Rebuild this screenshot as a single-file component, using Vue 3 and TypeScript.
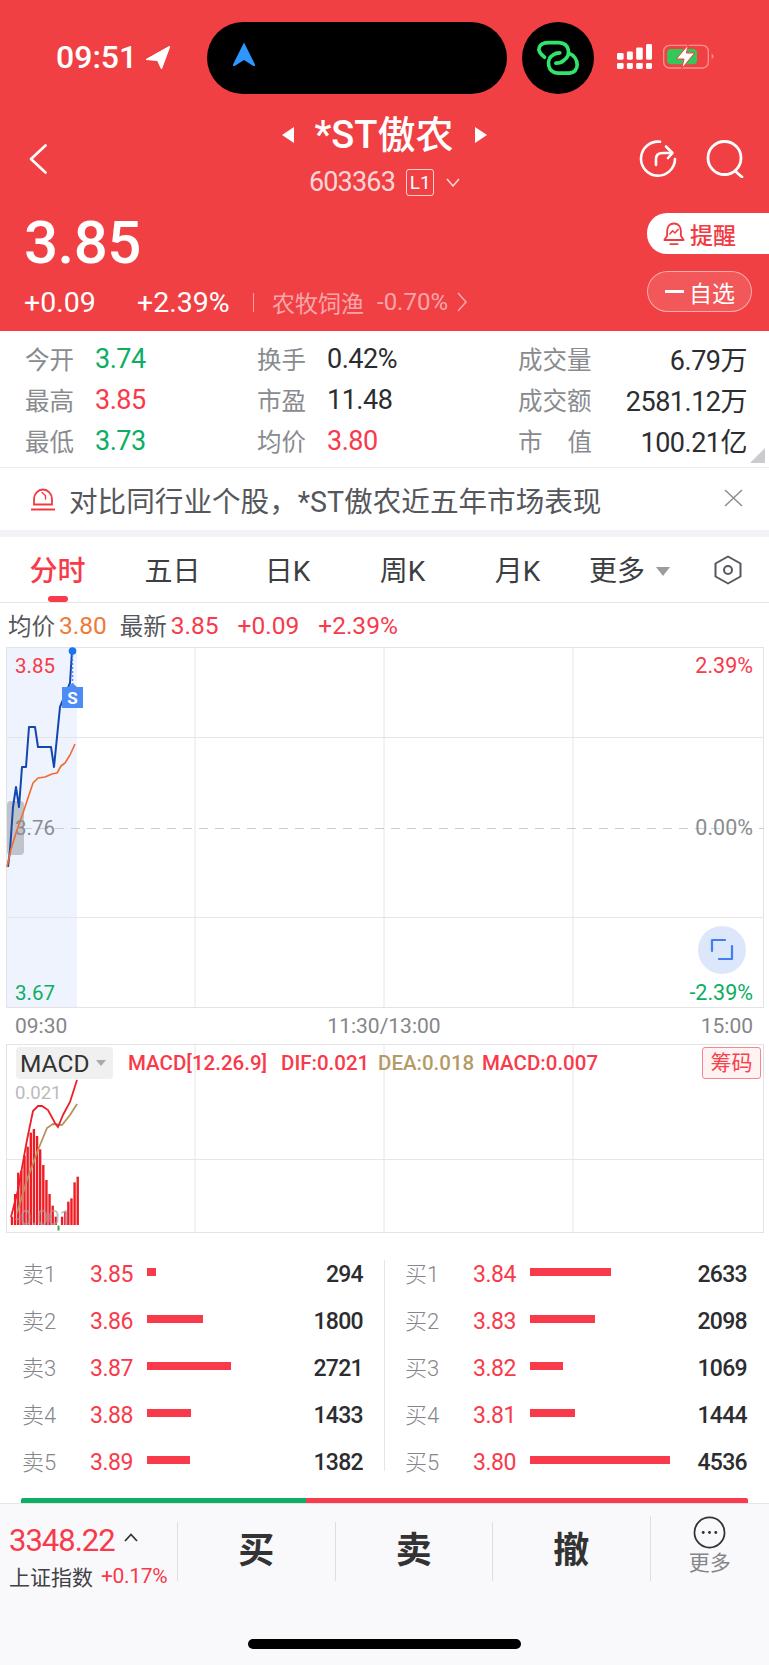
<script setup lang="ts">
interface Stat { label: string; value: string; tone: string }
const stats: Stat[][] = [
  [
    { label: '今开', value: '3.74', tone: 'green' },
    { label: '最高', value: '3.85', tone: 'red' },
    { label: '最低', value: '3.73', tone: 'green' },
  ],
  [
    { label: '换手', value: '0.42%', tone: 'dark' },
    { label: '市盈', value: '11.48', tone: 'dark' },
    { label: '均价', value: '3.80', tone: 'red' },
  ],
]
const stats3 = [
  { label: ['成交量'], value: '6.79万' },
  { label: ['成交额'], value: '2581.12万' },
  { label: ['市', '值'], value: '100.21亿' },
]
const tabs = ['分时', '五日', '日K', '周K', '月K']
const asks = [
  { n: '卖1', p: '3.85', v: 294 },
  { n: '卖2', p: '3.86', v: 1800 },
  { n: '卖3', p: '3.87', v: 2721 },
  { n: '卖4', p: '3.88', v: 1433 },
  { n: '卖5', p: '3.89', v: 1382 },
]
const bids = [
  { n: '买1', p: '3.84', v: 2633 },
  { n: '买2', p: '3.83', v: 2098 },
  { n: '买3', p: '3.82', v: 1069 },
  { n: '买4', p: '3.81', v: 1444 },
  { n: '买5', p: '3.80', v: 4536 },
]
const barW = (v: number) => `${(v * 0.0309).toFixed(1)}px`
const blue = '8,867 10,850 13,807 16,787 19,807 22,767 26,767 29,727 35,727 38,747 51,747 54,767 60,707 70,683 72,651'
const orange = '7,867 11,849 17,830 23,813 28,798 33,783 38,778 45,777 52,774 57,773 61,766 65,763 70,755 75,744'
const histTops = [530, 462, 398, 392, 347, 320, 278, 267, 288, 328, 375, 420, 462, 497, 530, 0, 530, 515, 485, 475, 427, 410]
const hist = histTops.map((t, i) => ({ x: 10.8 + i * 3.13, y: 1040 + t / 3, h: (555 - t) / 3 })).filter((b) => b.h < 100)
const dif = '11,1217 18,1190 27,1140 33,1111 38,1106 42,1106 48,1110 55,1123 58,1127 63,1115 70,1102 77,1080'
const dea = '17,1213 27,1180 38,1150 47,1128 53,1124 62,1125 70,1115 77,1104'
</script>

<template>
  <div class="page">
    <header class="hero">
      <div class="status">
        <div class="clock">
          <span>09:51</span>
          <svg class="loc" viewBox="148 46 24 23"><path d="M172 46 148 59.5 159.5 60.5 163.5 69Z" fill="#fff" stroke="#fff" stroke-width="1" stroke-linejoin="round" /></svg>
        </div>
        <div class="island">
          <svg class="nav-arrow" viewBox="232 43 24 27"><path d="M244 44.5 255 66.500 Q255.500 69 252.500 67.500L244 62 235.500 67.500Q232.500 69 233 66.500Z" fill="#2f96ff" /></svg>
        </div>
        <div class="island-dot">
          <svg class="link" viewBox="100 120 145 110" fill="none" stroke="#2fe56b" stroke-width="11" stroke-linecap="round">
            <path d="M132 172C102 150 115 128 145 128L175 128C208 130 212 165 192 180 184 188 172 190 166 190" />
            <path d="M205 160C238 172 240 220 205 220L172 220C140 218 135 178 158 165 164 160 172 159 178 159" />
          </svg>
        </div>
        <svg class="signal" viewBox="350 133 106 75" fill="#fff">
          <rect x="350" y="190" width="20" height="18" rx="4" /><rect x="380" y="190" width="18" height="18" rx="4" /><rect x="408" y="190" width="20" height="18" rx="4" /><rect x="438" y="190" width="18" height="18" rx="4" />
          <rect x="350" y="160" width="20" height="20" rx="4" /><rect x="380" y="155" width="18" height="25" rx="4" /><rect x="408" y="143" width="20" height="37" rx="4" /><rect x="438" y="133" width="18" height="47" rx="4" />
        </svg>
        <svg class="battery" viewBox="490 133 152 75">
          <rect x="492" y="137" width="134" height="68" rx="18" fill="none" stroke="#fff" stroke-opacity=".42" stroke-width="4" />
          <rect x="502" y="148" width="90" height="46" rx="12" fill="#34c759" />
          <path d="M636 161 642 170 636 180Z" fill="#fff" fill-opacity=".42" />
          <path d="M566 135 530 178 553 178 546 207 585 160 560 160Z" fill="#fff" stroke="#f24045" stroke-width="3" stroke-linejoin="round" />
        </svg>
      </div>

      <div class="nav">
        <svg class="back" viewBox="0 0 18 30" fill="none" stroke="#fff" stroke-width="2.600" stroke-linecap="round" stroke-linejoin="round"><path d="M16.500 1.500 2 15 16.500 28.500" /></svg>
        <div class="nav-mid">
          <div class="title-row">
            <i class="tri tri-l"></i>
            <span class="title">*ST傲农</span>
            <i class="tri tri-r"></i>
          </div>
          <div class="code-row">
            <span class="code">603363</span>
            <span class="l1">L1</span>
            <svg class="code-chev" viewBox="0 0 14 9" fill="none" stroke="#fff" stroke-opacity=".8" stroke-width="1.500"><path d="M1 1 7 8 13 1" /></svg>
          </div>
        </div>
        <div class="nav-icons">
          <svg class="nav-ic" viewBox="0 0 38 38" fill="none" stroke="#fff" stroke-width="2.600" stroke-linecap="round" stroke-linejoin="round">
            <path d="M21 1.800A17 17 0 1 0 36 19" />
            <path d="M17 25V19Q17 13 24 13H32" />
            <path d="M27 6.500 33.500 13 29 18" />
          </svg>
          <svg class="nav-ic" viewBox="0 0 38 38" fill="none" stroke="#fff" stroke-width="2.800" stroke-linecap="round"><circle cx="18.500" cy="18" r="16.500" /><path d="M29 31 36 37" /></svg>
        </div>
      </div>

      <div class="quote">
        <div class="quote-left">
          <div class="price">3.85</div>
          <div class="quote-line">
            <span class="chg">+0.09</span>
            <span class="pct">+2.39%</span>
            <i class="qsep"></i>
            <span class="sector">农牧饲渔</span>
            <span class="sector-pct">-0.70%</span>
            <svg class="sector-chev" viewBox="0 0 10 20" fill="none" stroke="#fff" stroke-opacity=".55" stroke-width="1.500"><path d="M1 1 9 10 1 19" /></svg>
          </div>
        </div>
        <div class="quote-right">
          <div class="remind">
            <svg class="bell" viewBox="0 0 24 26" fill="none" stroke="#f23a42" stroke-width="2" stroke-linecap="round" stroke-linejoin="round">
              <path d="M12 1.500C6.500 1.500 4.500 6 4.500 10V15L1.500 19.500H22.500L19.500 15V10C19.500 6 17.500 1.500 12 1.500Z" />
              <path d="M8 24H16" />
              <path d="M7.500 13 10.500 9.500 13 12 16.500 8" stroke-width="1.600" />
            </svg>
            <span>提醒</span>
          </div>
          <div class="watch"><i class="minus"></i><span>自选</span></div>
        </div>
      </div>
    </header>

    <section class="stats">
      <div v-for="(col, ci) in stats" :key="ci" class="stat-col" :class="`stat-col-${ci}`">
        <div v-for="s in col" :key="s.label" class="stat-row">
          <span class="s-label">{{ s.label }}</span>
          <span class="s-val" :class="s.tone">{{ s.value }}</span>
        </div>
      </div>
      <div class="stat-col stat-col-2">
        <div v-for="s in stats3" :key="s.value" class="stat-row between">
          <span class="s-label wide"><span v-for="c in s.label" :key="c">{{ c }}</span></span>
          <span class="s-val dark">{{ s.value }}</span>
        </div>
      </div>
      <i class="corner"></i>
    </section>

    <section class="notice">
      <svg class="alarm" viewBox="0 0 24 24" fill="none" stroke="#f23a42" stroke-width="1.800" stroke-linecap="round">
        <path d="M3 17.500V12A9 9.500 0 0 1 21 12V17.500Z" />
        <path d="M.5 22.500H23.500" />
        <path d="M11 5.500 14.500 8.500V12" stroke-width="1.400" />
      </svg>
      <span class="notice-text">对比同行业个股，*ST傲农近五年市场表现</span>
      <svg class="close" viewBox="0 0 19 18" fill="none" stroke="#8a8d93" stroke-width="1.500"><path d="M1 1 18 17M18 1 1 17" /></svg>
    </section>
    <div class="band"></div>

    <nav class="tabs">
      <div v-for="(t, i) in tabs" :key="t" class="tab" :class="{ active: i === 0 }">{{ t }}</div>
      <div class="tab more"><span>更多</span><i class="more-tri"></i></div>
      <div class="tab gear">
        <svg viewBox="0 0 28 30" width="28" height="30" fill="none" stroke="#55585e" stroke-width="2"><path d="M14 1.500 26.500 8.500V21.500L14 28.500 1.500 21.500V8.500Z" stroke-linejoin="round" /><circle cx="14" cy="15" r="4" /></svg>
      </div>
    </nav>

    <div class="info">
      <span class="i-k">均价</span><span class="i-avg">3.80</span>
      <span class="i-k i-k2">最新</span><span class="red">3.85</span>
      <span class="red i-chg">+0.09</span>
      <span class="red i-pct">+2.39%</span>
    </div>

    <section class="chart">
      <svg class="chart-svg" viewBox="6 647 758 361">
        <rect x="7" y="648" width="70" height="359" fill="#eef3fe" />
        <g stroke="#e6e6e8" stroke-width="1">
          <path d="M195 648V1007M384 648V1007M573 648V1007M7 737.500H764M7 917.500H764" />
        </g>
        <path d="M7 828.500H764" stroke="#bcd0e4" stroke-width="1" stroke-dasharray="9 7" />
        <rect x="7" y="801" width="17" height="54" rx="4" fill="#bfc3ca" />
        <polyline :points="blue" fill="none" stroke="#1247b0" stroke-width="2" stroke-linejoin="round" />
        <polyline :points="orange" fill="none" stroke="#f26a2e" stroke-width="1.600" stroke-linejoin="round" />
        <path d="M72.500 651V687" stroke="#4d8cf5" stroke-width="1.500" stroke-dasharray="2 2" />
        <circle cx="72.500" cy="651" r="3.800" fill="#1a73f0" />
        <path d="M62 687H68L72.500 683 77 687H83V708H62Z" fill="#4d8cf5" />
      </svg>
      <span class="s-tag">S</span>
      <span class="axis al t1 red">3.85</span>
      <span class="axis al t2 gray">3.76</span>
      <span class="axis al t3 green">3.67</span>
      <span class="axis ar t1 red">2.39%</span>
      <span class="axis ar t2 gray">0.00%</span>
      <span class="axis ar t3 green">-2.39%</span>
      <div class="expand">
        <svg viewBox="0 0 24 24" width="24" height="24" fill="none" stroke="#3f7ff0" stroke-width="2.200" stroke-linecap="round" stroke-linejoin="round"><path d="M2 13V2H15" /><path d="M22 8V21H9" /></svg>
      </div>
    </section>

    <div class="times">
      <span>09:30</span>
      <span>11:30/13:00</span>
      <span>15:00</span>
    </div>

    <section class="macd">
      <svg class="chart-svg" viewBox="6 1044 758 189">
        <path d="M195 1045V1232M384 1045V1232M573 1045V1232M7 1159.500H764" stroke="#e6e6e8" stroke-width="1" fill="none" />
        <rect v-for="b in hist" :key="b.x" :x="b.x" :y="b.y" width="2.400" :height="b.h" fill="#f01c24" />
        <rect x="57.500" y="1225.500" width="2" height="5" fill="#3fae49" />
        <polyline :points="dea" fill="none" stroke="#b5935c" stroke-width="1.800" />
        <polyline :points="dif" fill="none" stroke="#ec1f26" stroke-width="1.800" />
      </svg>
      <div class="macd-head">
        <div class="chip"><span>MACD</span><i class="chip-tri"></i></div>
        <span class="mp red m1">MACD[12.26.9]</span>
        <span class="mp red m2">DIF:0.021</span>
        <span class="mp tan m3">DEA:0.018</span>
        <span class="mp red m4">MACD:0.007</span>
        <span class="chouma">筹码</span>
      </div>
      <span class="macd-hi">0.021</span>
      <span class="macd-lo">-0.001</span>
    </section>

    <section class="book">
      <div class="side">
        <div v-for="r in asks" :key="r.n" class="b-row">
          <span class="b-n">{{ r.n }}</span>
          <span class="b-p red">{{ r.p }}</span>
          <span class="b-track"><i class="b-bar" :style="{ width: barW(r.v) }"></i></span>
          <span class="b-v">{{ r.v }}</span>
        </div>
      </div>
      <i class="book-sep"></i>
      <div class="side side-r">
        <div v-for="r in bids" :key="r.n" class="b-row">
          <span class="b-n">{{ r.n }}</span>
          <span class="b-p red">{{ r.p }}</span>
          <span class="b-track"><i class="b-bar" :style="{ width: barW(r.v) }"></i></span>
          <span class="b-v">{{ r.v }}</span>
        </div>
      </div>
    </section>

    <div class="ratio"><i class="r-g"></i><i class="r-r"></i></div>

    <footer class="foot">
      <div class="foot-row">
        <div class="idx">
          <div class="idx-top"><span class="idx-num">3348.22</span><svg class="idx-up" viewBox="0 0 14 9" fill="none" stroke="#333" stroke-width="1.800"><path d="M1 8 7 1.500 13 8" /></svg></div>
          <div class="idx-bot"><span class="idx-name">上证指数</span><span class="idx-pct">+0.17%</span></div>
        </div>
        <div class="act">买</div>
        <div class="act">卖</div>
        <div class="act">撤</div>
        <div class="act-more">
          <svg viewBox="0 0 34 34" width="33" height="33" fill="none" stroke="#333" stroke-width="1.800"><circle cx="17" cy="17" r="15.500" /><g fill="#333" stroke="none"><circle cx="10.500" cy="17" r="1.500" /><circle cx="17" cy="17" r="1.500" /><circle cx="23.500" cy="17" r="1.500" /></g></svg>
          <span>更多</span>
        </div>
      </div>
      <i class="home"></i>
    </footer>
  </div>
</template>

<style scoped>
.page {
  width: 769px;
  height: 1665px;
  overflow: hidden;
  background: #fff;
  font-family: Roboto, "Noto Sans CJK SC", sans-serif;
  color: #2c2d30;
}
.red { color: #f83a4a; }
.green { color: #0bae63; }
.dark { color: #2c2d30; }
.gray { color: #8b8c8e; }
.tan { color: #b59a66; }

.hero { height: 331px; background: #f14044; color: #fff; display: flex; flex-direction: column; }
.status { height: 94px; padding-top: 22px; box-sizing: border-box; display: flex; align-items: flex-start; position: relative; }
.clock { width: 207px; height: 72px; display: flex; align-items: center; box-sizing: border-box; padding-left: 56px; font-size: 32px; font-weight: 500; gap: 9px; margin-top: -1px; }
.loc { width: 24px; height: 23px; }
.island { width: 300px; height: 72px; background: #000; border-radius: 36px; display: flex; align-items: center; }
.nav-arrow { width: 24px; height: 27px; margin-left: 25px; margin-top: -8px; }
.island-dot { width: 72px; height: 72px; margin-left: 15px; background: #000; border-radius: 50%; display: flex; align-items: center; justify-content: center; }
.link { width: 48px; height: 36.400px; }
.signal { width: 35px; height: 25px; margin: 22px 0 0 23px; }
.battery { width: 50.700px; height: 25px; margin: 22px 0 0 11px; }

.nav { height: 106px; display: flex; position: relative; }
.back { width: 18px; height: 30px; margin: 50px 0 0 29px; }
.nav-mid { position: absolute; left: 0; right: 0; top: 20px; display: flex; flex-direction: column; align-items: center; }
.title-row { display: flex; align-items: center; height: 42px; padding-left: 0; }
.title { font-size: 38px; font-weight: 500; line-height: 42px; margin: 0 21px 0 20px; white-space: nowrap; }
.tri { width: 0; height: 0; border-top: 8px solid transparent; border-bottom: 8px solid transparent; }
.tri-l { border-right: 12px solid #fff; }
.tri-r { border-left: 12px solid #fff; }
.code-row { display: flex; align-items: center; margin-top: 13px; height: 27px; color: rgba(255, 255, 255, 0.8); }
.code { font-size: 27px; line-height: 27px; letter-spacing: -0.8px; }
.l1 { width: 28px; height: 27px; box-sizing: border-box; margin-left: 11px; border: 1px solid rgba(255, 255, 255, 0.75); border-radius: 3px; font-size: 19px; line-height: 25px; text-align: center; color: #fff; }
.code-chev { width: 14px; height: 9px; margin-left: 12px; }
.nav-icons { margin-left: auto; padding: 46px 25px 0 0; display: flex; gap: 29px; }
.nav-ic { width: 38px; height: 38px; }

.quote { flex: 1; display: flex; justify-content: space-between; padding-left: 24px; }
.quote-left { display: flex; flex-direction: column; }
.price { font-size: 60px; line-height: 70px; height: 74px; padding-top: 8px; font-weight: 500; margin-top: 0; letter-spacing: -0.5px; }
.quote-line { display: flex; align-items: center; height: 28px; margin-top: 6px; font-size: 28.500px; white-space: nowrap; }
.chg { width: 113px; }
.pct { width: 116px; }
.qsep { width: 1px; height: 19px; background: rgba(255, 255, 255, 0.5); margin-right: 18px; }
.sector, .sector-pct { color: rgba(255, 255, 255, 0.55); font-size: 23px; }
.sector-pct { margin-left: 13px; font-size: 24px; }
.sector-chev { width: 10px; height: 20px; margin-left: 9px; }
.quote-right { width: 122px; padding-top: 13px; display: flex; flex-direction: column; }
.remind { height: 41px; background: #fff; border-radius: 20px 0 0 20px; display: flex; align-items: center; padding-left: 16px; color: #f23a42; font-size: 23px; font-weight: 500; gap: 5px; }
.bell { width: 22px; height: 24px; }
.watch { width: 105px; height: 41px; margin-top: 17px; box-sizing: border-box; border: 1px solid rgba(255, 255, 255, 0.5); background: rgba(255, 255, 255, 0.12); border-radius: 20.500px; display: flex; align-items: center; padding-left: 17px; gap: 5px; font-size: 23px; }
.minus { width: 19px; height: 2.500px; background: #fff; }

.stats { height: 137px; box-sizing: border-box; padding: 7px 22px 0 25px; display: flex; border-bottom: 1px solid #ececee; position: relative; }
.stat-col-0 { width: 232px; }
.stat-col-1 { width: 261px; }
.stat-col-2 { flex: 1; }
.stat-row { height: 41px; display: flex; align-items: center; white-space: nowrap; }
.between { justify-content: space-between; }
.s-label { color: #8a8b8f; font-size: 24.500px; width: 70px; }
.s-label.wide { width: 74px; display: flex; justify-content: space-between; }
.s-val { font-size: 27px; letter-spacing: -0.5px; }
.corner { position: absolute; right: 4px; bottom: 4px; width: 15px; height: 15px; background: #c9cbcf; clip-path: polygon(100% 0, 100% 100%, 0 100%); }

.notice { height: 62px; display: flex; align-items: center; padding-left: 31px; }
.alarm { width: 24px; height: 24px; }
.notice-text { margin-left: 14px; font-size: 28.600px; color: #55575c; white-space: nowrap; }
.close { width: 19px; height: 18px; margin-left: auto; margin-right: 26px; margin-top: -3px; }
.band { height: 7px; background: #f1f3f9; }

.tabs { height: 66px; box-sizing: border-box; border-bottom: 1px solid #e4e4e6; display: flex; align-items: center; }
.tab { width: 115px; text-align: center; font-size: 28px; color: #3c3e42; position: relative; line-height: 69px; height: 65px; white-space: nowrap; }
.tab.active { color: #f83a4a; font-weight: 500; }
.tab.active::after { content: ""; position: absolute; left: 48px; bottom: 0; width: 20px; height: 6px; border-radius: 3px; background: #f83a4a; }
.more { display: flex; align-items: center; justify-content: center; gap: 11px; width: 112px; padding-right: 3px; box-sizing: border-box; }
.more span { line-height: 65px; margin-top: 4px; }
.more-tri { width: 0; height: 0; border-left: 7px solid transparent; border-right: 7px solid transparent; border-top: 9px solid #9a9ca0; margin-top: 3px; }
.gear { flex: 1; display: flex; align-items: center; justify-content: center; }

.info { height: 44px; display: flex; align-items: center; padding-left: 8px; font-size: 24.500px; white-space: nowrap; }
.i-k { color: #55575c; font-size: 23.500px; }
.i-avg { color: #f07a3a; margin-left: 4px; }
.i-k2 { margin-left: 13px; }
.i-k2 + .red { margin-left: 4px; }
.i-chg { margin-left: 19px; }
.i-pct { margin-left: 19px; }

.chart { height: 361px; margin: 0 5px 0 6px; position: relative; box-sizing: border-box; border: 1px solid #e3e3e5; }
.chart-svg { position: absolute; left: -1px; top: -1px; width: 758px; height: calc(100% + 2px); }
.s-tag { position: absolute; left: 55px; top: 40px; width: 21px; height: 21px; text-align: center; color: #fff; font-size: 17px; line-height: 21px; font-weight: 700; }
.axis { position: absolute; font-size: 20.500px; line-height: 24px; white-space: nowrap; }
.ar { font-size: 21.500px; }
.al { left: 8px; }
.ar { right: 10px; }
.t1 { top: 6px; }
.t2 { top: 168px; }
.t3 { top: 333px; }
.expand { position: absolute; left: 691px; top: 278px; width: 48px; height: 48px; border-radius: 50%; background: #dce7fb; display: flex; align-items: center; justify-content: center; }

.times { height: 36px; display: flex; justify-content: space-between; align-items: center; padding: 0 16px 0 15px; font-size: 21px; color: #85868a; }

.macd { height: 189px; margin: 0 5px 0 6px; position: relative; box-sizing: border-box; border: 1px solid #e3e3e5; }
.macd-head { position: relative; height: 32px; margin-top: 2px; font-size: 20.500px; white-space: nowrap; }
.chip { position: absolute; left: 9px; top: 0; width: 97px; height: 32px; background: #f0f0f0; border-radius: 4px; display: flex; align-items: center; padding-left: 4px; box-sizing: border-box; font-size: 24.500px; color: #333; gap: 7px; }
.chip-tri { width: 0; height: 0; border-left: 5px solid transparent; border-right: 5px solid transparent; border-top: 6px solid #aaa; }
.mp { position: absolute; top: 3px; line-height: 26px; font-weight: 500; }
.m1 { left: 121px; }
.m2 { left: 274px; }
.m3 { left: 371px; }
.m4 { left: 475px; }
.chouma { position: absolute; left: 695px; top: 0; width: 59px; height: 32px; box-sizing: border-box; border: 1px solid #f6868d; border-radius: 3px; background: #fff2f2; color: #f5434c; font-size: 21px; line-height: 30px; text-align: center; }
.macd-hi { position: absolute; left: 8px; top: 36px; font-size: 18.500px; line-height: 24px; color: #b9babc; }
.macd-lo { position: absolute; left: 8px; top: 161px; font-size: 20px; line-height: 24px; color: rgba(160, 162, 166, 0.7); }

.book { height: 265px; box-sizing: border-box; padding: 18px 22px 0; display: flex; position: relative; }
.side { width: 341px; }
.side-r { width: 342px; margin-left: 20px; }
.book-sep { width: 1px; height: 211px; margin: 9px 0 0 21px; background: #e6e6e8; }
.b-row { height: 47px; display: flex; align-items: center; white-space: nowrap; }
.b-n { width: 68px; font-size: 22px; color: #85868a; font-weight: 300; margin-top: -6px; }
.b-p { width: 57px; font-size: 23px; letter-spacing: -0.5px; }
.b-track { flex: 1; display: flex; align-items: center; height: 8px; margin-top: -5px; }
.b-bar { display: block; height: 8px; background: #f83a4a; }
.b-v { font-size: 23px; color: #2c2d30; font-weight: 500; letter-spacing: -0.7px; }

.ratio { height: 5px; margin: 0 21px; display: flex; }
.r-g { width: 285px; background: #0bae63; border-radius: 2px 0 0 0; }
.r-r { flex: 1; background: #f83a4a; border-radius: 0 2px 0 0; }

.foot { height: 162px; box-sizing: border-box; border-top: 1px solid #e5e5e8; background: #f9f9fc; padding-top: 18px; display: flex; flex-direction: column; }
.foot-row { display: flex; height: 59px; }
.idx { width: 177px; box-sizing: border-box; padding-left: 9px; white-space: nowrap; }
.idx-top { display: flex; align-items: center; height: 36px; }
.idx-num { font-size: 31px; letter-spacing: -1px; color: #f83a4a; }
.idx-up { width: 14px; height: 9px; margin-left: 9px; margin-top: -6px; }
.idx-bot { display: flex; align-items: center; height: 36px; }
.idx-name { font-size: 21px; color: #3f4145; }
.idx-pct { font-size: 21px; color: #f83a4a; margin-left: 8px; letter-spacing: -0.3px; }
.act { width: 157.500px; border-left: 1px solid #dedee0; box-sizing: border-box; text-align: center; font-size: 36px; font-weight: 700; color: #333; line-height: 59px; }
.act-more { flex: 1; border-left: 1px solid #dedee0; display: flex; flex-direction: column; align-items: center; margin-top: -6px; padding-top: 0; font-size: 21px; color: #85868a; line-height: 28px; }
.home { width: 273px; height: 10px; margin: 58px 0 0 248px; background: #000; border-radius: 5px; }
</style>

<style>
html, body { margin: 0; padding: 0; background: #fff; }
</style>
